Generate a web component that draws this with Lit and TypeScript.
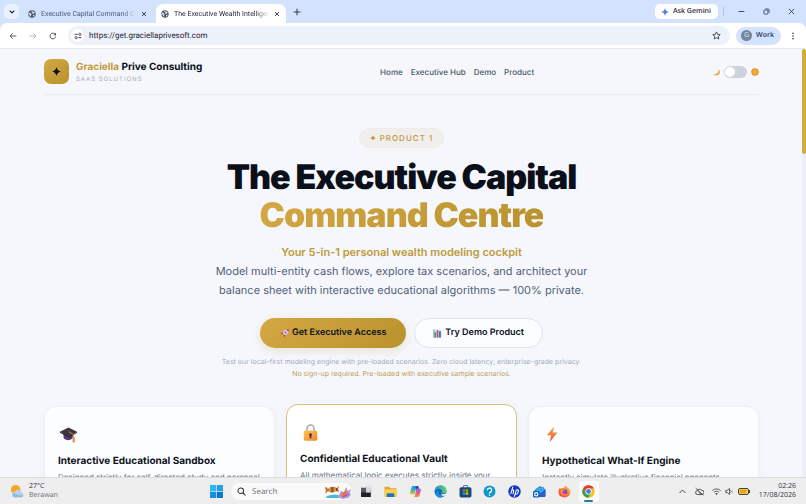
import { LitElement, html, svg, css, nothing } from "lit";
import { customElement, property, state } from "lit/decorators.js";
import { classMap } from "lit/directives/class-map.js";

const glyphs: Record<string, unknown> = {
  globe: svg`<circle cx="12" cy="12" r="11" fill="#4b5563"/><path d="M3 8l5 1 3 4-2 2v5l-3-2-1-4-3-2zM11 2l-1 4 4 2-1 3 4 1 1-3 4-1M15 15l5-1-3 6-2-1z" fill="#d7e3f8"/>`,
  close: svg`<path d="M4 4l16 16M20 4L4 20" stroke="#2b2f36" stroke-width="3.600" fill="none"/>`,
  closeThin: svg`<path d="M3 3l18 18M21 3L3 21" stroke="#2b3a5c" stroke-width="3" fill="none"/>`,
  plus: svg`<path d="M12 2v20M2 12h20" stroke="#333a48" stroke-width="3" fill="none"/>`,
  down: svg`<path d="M5 8l7 7 7-7" stroke="#1f2a44" stroke-width="3.6" fill="none"/>`,
  up: svg`<path d="M4 16l8-8 8 8" stroke="#333" stroke-width="2.4" fill="none"/>`,
  min: svg`<path d="M2 12h20" stroke="#2b3a5c" stroke-width="3"/>`,
  restore: svg`<rect x="3" y="7" width="14" height="14" rx="3" fill="none" stroke="#2b3a5c" stroke-width="2.8"/><path d="M8 3h9a4 4 0 0 1 4 4v9" fill="none" stroke="#2b3a5c" stroke-width="2.6"/>`,
  back: svg`<path d="M22 12H3M11 4l-8 8 8 8" stroke="#444746" stroke-width="2.6" fill="none"/>`,
  forward: svg`<path d="M2 12h19M13 4l8 8-8 8" stroke="#a9acb0" stroke-width="2.6" fill="none"/>`,
  reload: svg`<path d="M20 13a8.500 8.500 0 1 1-3-7.500l3 3" stroke="#444746" stroke-width="2.700" fill="none"/><path d="M21 2v8h-8z" fill="#444746"/>`,
  tune: svg`<path d="M2 7h9M13 17h9" stroke="#444746" stroke-width="3"/><circle cx="17.500" cy="7" r="3.300" fill="none" stroke="#444746" stroke-width="2.800"/><circle cx="6.500" cy="17" r="3.300" fill="none" stroke="#444746" stroke-width="2.800"/>`,
  star: svg`<path d="M12 2.500l2.900 6.500 7 .700-5.300 4.700 1.600 7-6.200-3.700-6.200 3.700 1.600-7L2.100 9.700l7-.700z" fill="none" stroke="#3c4043" stroke-width="2.400"/>`,
  dots: svg`<circle cx="12" cy="4" r="2.400" fill="#3c4043"/><circle cx="12" cy="12" r="2.400" fill="#3c4043"/><circle cx="12" cy="20" r="2.400" fill="#3c4043"/>`,
  gemini: svg`<defs><linearGradient id="g" x1="0" y1="0" x2="1" y2="1"><stop offset="0" stop-color="#ea4335"/><stop offset=".35" stop-color="#6a6fe0"/><stop offset=".65" stop-color="#3186ff"/><stop offset="1" stop-color="#34a853"/></linearGradient></defs><path d="M12 0c1 7 5 11 12 12-7 1-11 5-12 12-1-7-5-11-12-12C7 11 11 7 12 0z" fill="url(#g)"/><path d="M0 12c4 .5 8 2 10 5l-1-5z" fill="#fbbc04"/>`,
  spark: svg`<path d="M12 0c1.500 7 5 10.500 12 12-7 1.500-10.500 5-12 12-1.500-7-5-10.500-12-12C7 10.500 10.500 7 12 0z" fill="currentColor"/>`,
  moon: svg`<path d="M18 2c4 9-2 18-14 17 7 7 18 3 19-6 .3-5-2-9-5-11z" fill="#f6b545"/><path d="M21 8c1 7-4 13-12 13 7 3 14-2 14-8 0-2-1-4-2-5z" fill="#e58e36"/>`,
  sun: svg`<circle cx="12" cy="12" r="11" fill="#e29a2c"/><circle cx="12" cy="12" r="8" fill="#f8ab2f"/><path d="M12 1v3M12 20v3M1 12h3M20 12h3M4 4l2 2M18 18l2 2M20 4l-2 2M4 20l2-2" stroke="#c98220" stroke-width="2"/>`,
  rocket: svg`<path d="M24 0c-8 0-13 3-18 9l9 9c6-5 9-10 9-18z" fill="#dccfdf"/><path d="M24 0c-3 0-5 .3-8 1.500L22.500 8C23.700 5 24 3 24 0z" fill="#e0435f"/><path d="M8 8l-7 5 7 1zM16 16l-5 7-1-7z" fill="#d23a66"/><circle cx="14.500" cy="9.500" r="3" fill="#5a8fc4"/><path d="M6 14l4 4-8 4z" fill="#f3923c"/>`,
  chart: svg`<rect x="1" y="1" width="22" height="22" rx="2" fill="#dfe7ee"/><rect x="3" y="9" width="5" height="14" fill="#3da874"/><rect x="9.500" y="3" width="5" height="20" fill="#d8466b"/><rect x="16" y="6" width="5" height="17" fill="#2e7fd0"/><path d="M1 1h3v22H1z" fill="#7f9db5"/>`,
  cap: svg`<path d="M5 10v7c3 4 10 4 13 0v-6z" fill="#5b3a78"/><path d="M0 8l12-6 12 6-11 7z" fill="#3d3444"/><path d="M0 8l13 7 11-7v1.500l-11 7-13-7z" fill="#241d2c"/><path d="M12 8l7 4v4" stroke="#eb9454" stroke-width="1.200" fill="none"/><path d="M18 15h2.500l.5 8h-3.500z" fill="#ef8a45"/>`,
  lock: svg`<defs><linearGradient id="l" x1="0" y1="0" x2="1" y2="1"><stop offset="0" stop-color="#ffc342"/><stop offset="1" stop-color="#f2853e"/></linearGradient></defs><path d="M7 11V6.500a5 5 0 0 1 10 0V11" fill="none" stroke="#a4a8b2" stroke-width="2.200"/><rect x="2.500" y="9.500" width="19" height="14" rx="2" fill="url(#l)"/><path d="M12 13a2 2 0 0 1 1.200 3.600V20h-2.400v-3.400A2 2 0 0 1 12 13z" fill="#3e3340"/>`,
  bolt: svg`<defs><linearGradient id="b" x1="0" y1="0" x2="0" y2="1"><stop offset="0" stop-color="#fba63f"/><stop offset="1" stop-color="#e4554c"/></linearGradient></defs><path d="M14 1L4 13h6l-2 10L19 9h-6.500z" fill="url(#b)"/>`,
  weather: svg`<circle cx="9" cy="9" r="7.500" fill="#f6a623"/><path d="M8 21a4.500 4.500 0 0 1 0-9 6 6 0 0 1 11 1.500 4 4 0 0 1 0 7.500z" fill="#b9d2ee"/><path d="M6 21a3 3 0 0 1 2-6c5 4 9 3 12 2a3 3 0 0 1-1 4z" fill="#94b6df"/>`,
  windows: svg`<path d="M0 0h11.400v11.400H0z" fill="#2fb4f2"/><path d="M12.600 0H24v11.400H12.600z" fill="#1ea2ea"/><path d="M0 12.600h11.400V24H0z" fill="#1590e0"/><path d="M12.600 12.600H24V24H12.600z" fill="#0878d3"/>`,
  search: svg`<circle cx="10" cy="10" r="7.500" fill="none" stroke="#2e3238" stroke-width="2.700"/><path d="M15.500 15.500l7 7" stroke="#2e3238" stroke-width="3"/>`,
  taskview: svg`<rect x="10" y="1" width="13" height="17" rx="1" fill="#e2e2e2"/><rect x="2" y="5" width="10" height="13" fill="#55585c"/><path d="M2 14h9V9h9v13H2z" fill="#1f2124"/><path d="M11 5h9v9h-9z" fill="#d5d5d5"/>`,
  explorer: svg`<path d="M1 3h8l3 3h10a1 1 0 0 1 1 1v14H1z" fill="#e5a32b"/><path d="M1 8h22v13a1 1 0 0 1-1 1H2a1 1 0 0 1-1-1z" fill="#fbd04f"/><path d="M5 22v-5a2 2 0 0 1 2-2h10a2 2 0 0 1 2 2v5z" fill="#1b74bd"/>`,
  copilot: svg`<defs><linearGradient id="c1" x1="0" y1="0" x2="0" y2="1"><stop offset="0" stop-color="#1497ec"/><stop offset=".5" stop-color="#35b89e"/><stop offset="1" stop-color="#e8c62e"/></linearGradient><linearGradient id="c2" x1="0" y1="0" x2="0" y2="1"><stop offset="0" stop-color="#a159e8"/><stop offset=".5" stop-color="#ef5a8c"/><stop offset="1" stop-color="#f98d42"/></linearGradient></defs><path d="M15 2H8C5 2 4.500 5 3.500 9S0 17 5 17h4c2 0 2-4 3-8s1-6 3-7z" fill="url(#c1)"/><path d="M9 22h7c3 0 3.500-3 4.500-7S24 7 19 7h-4c-2 0-2 4-3 8s-1 6-3 7z" fill="url(#c2)"/><path d="M13 2h3c2 0 2 3 3 5h-4c-1 0-2 1-2 3-1-3-2-8 0-8z" fill="#1d4fb8"/>`,
  edge: svg`<defs><linearGradient id="e" x1="0" y1="0" x2="1" y2="0"><stop offset="0" stop-color="#1e9be0"/><stop offset="1" stop-color="#5fd35a"/></linearGradient></defs><circle cx="12" cy="12" r="11" fill="#1267b8"/><path d="M1 12C2 4 7 1 12 1c7 0 11 5 11 9 0 5-5 6-8 5-2-1 0-2 0-4 0-3-4-5-8-4-3 1-5 3-6 5z" fill="url(#e)"/><path d="M9 10c-4 6 3 12 11 8-3 5-9 6-13 4-6-4-4-11 2-12z" fill="#1b8fd8"/><path d="M14 16c3 2 7 1 9-2v3l-3 3c-5 1-8-2-6-4z" fill="#eef1f4"/>`,
  store: svg`<path d="M8 5V3a2 2 0 0 1 2-2h4a2 2 0 0 1 2 2v2" fill="none" stroke="#2d87c9" stroke-width="2"/><rect x="1" y="4" width="22" height="19" rx="3" fill="#174a78"/><path d="M7 8h4.500v4.500H7z" fill="#f25022"/><path d="M12.500 8H17v4.500h-4.500z" fill="#7fba00"/><path d="M7 13.500h4.500V18H7z" fill="#00a4ef"/><path d="M12.500 13.500H17V18h-4.500z" fill="#ffb900"/>`,
  help: svg`<circle cx="12" cy="12" r="11" fill="#0f97cf"/><path d="M8 9.500a4 4 0 1 1 5.500 3.800c-1.500.7-1.500 1.200-1.500 2.700" fill="none" stroke="#fff" stroke-width="2.400"/><circle cx="12" cy="19" r="1.500" fill="#fff"/>`,
  hp: svg`<circle cx="12" cy="12" r="11.500" fill="#1338c9"/><path d="M9 3L5 17M7 10c2-1 4-1 3.500 1.500L9 17M15.500 9L11.500 22M15.500 9h2c2 0 2 1 1.500 3l-1 3c-.5 1.500-1 2-3 2h-1" fill="none" stroke="#fff" stroke-width="1.900"/>`,
  outlook: svg`<path d="M3 9l10-7 10 6v12a2 2 0 0 1-2 2H6a3 3 0 0 1-3-3z" fill="#1683dd"/><path d="M6 6l14-3v9l-9 4-5-4z" fill="#3fa3e8"/><path d="M4 20L23 9v11a2 2 0 0 1-2 2H6z" fill="#2a5fd0"/><rect x="0" y="11" width="12" height="12" rx="2" fill="#1067be"/><circle cx="6" cy="17" r="3" fill="none" stroke="#fff" stroke-width="2"/>`,
  firefox: svg`<defs><linearGradient id="f" x1="1" y1="0" x2="0" y2="1"><stop offset="0" stop-color="#ffd43c"/><stop offset=".5" stop-color="#ff7a2c"/><stop offset="1" stop-color="#ee2e55"/></linearGradient></defs><path d="M3 5c0 2 1 2 2 2 2-2 4-1 6-1 0-2 2-4 4-5 0 3 4 4 6 7 1 1 2 3 2 5 0 6-5 10-11 10S1 19 1 13c0-3 1-6 2-8z" fill="url(#f)"/><circle cx="12.500" cy="13" r="5" fill="#8347dc"/><path d="M5 9c4-2 6 0 8 1-2 0-4 1-5 3 1 4 6 5 9 2-1 5-8 6-11 2-2-3-2-6-1-8z" fill="#ff8a30"/>`,
  chrome: svg`<circle cx="12" cy="12" r="11.500" fill="#fbc116"/><path d="M2 6.300A11.500 11.500 0 0 1 22 6.300H12L7 15z" fill="#e33b2e"/><path d="M2 6.300A11.500 11.500 0 0 0 11.500 23.500L17 15l-5 2-5-2z" fill="#2da24c"/><circle cx="12" cy="12" r="5.800" fill="#fff"/><circle cx="12" cy="12" r="4.500" fill="#3f7fe8"/>`,
  cloudOff: svg`<path d="M7 20a5 5 0 0 1-1-10 7 7 0 0 1 12-1 5.500 5.500 0 0 1 1 11z" fill="none" stroke="#333" stroke-width="2.200"/><path d="M2 3l20 19M9 13l7 6" stroke="#333" stroke-width="2.200"/>`,
  wifi: svg`<path d="M1 9.500a16 16 0 0 1 22 0M5 14a10 10 0 0 1 14 0" fill="none" stroke="#4a4a4a" stroke-width="2.300"/><path d="M8.500 17.500a5 5 0 0 1 7 0L12 21.500z" fill="#333"/>`,
  sound: svg`<path d="M2 9h4l6-5v16l-6-5H2z" fill="none" stroke="#333" stroke-width="2"/><path d="M15 9a4 4 0 0 1 0 6" fill="none" stroke="#333" stroke-width="2"/><path d="M18 6a8 8 0 0 1 0 12" fill="none" stroke="#b5b5b5" stroke-width="2"/>`,
};

const icon = (name: string) =>
  html`<svg class="icon" viewBox="0 0 24 24" aria-hidden="true">${glyphs[name]}</svg>`;

const iconStyles = css`
  * { box-sizing: border-box; }
  .icon { width: var(--icon, 8px); height: var(--icon, 8px); flex: none; display: block; }
  button { font: inherit; color: inherit; border: 0; padding: 0; background: none; display: flex; align-items: center; justify-content: center; text-rendering: inherit; }
  input { font: inherit; color: inherit; border: 0; padding: 0; margin: 0; background: none; outline: none; min-width: 0; text-rendering: inherit; }
  a { color: inherit; text-decoration: none; }
`;

@customElement("browser-chrome")
class BrowserChrome extends LitElement {
  static styles = [iconStyles, css`
    :host { display: block; font: 7px/10px Roboto, "Noto Sans", sans-serif; color: #1f2430; background: #d3e2fd; }
    .strip { display: flex; height: 23px; padding: 0 11px 0 4px; align-items: center; }
    .search-tabs { width: 15px; height: 15px; border-radius: 5px; background: #e9f0fe; }
    .tabs { display: flex; gap: 3px; align-self: stretch; align-items: flex-end; margin-left: 4px; }
    .tab { display: flex; align-items: center; gap: 5px; width: 130px; height: 19px; padding: 0 6px 0 5px; color: #4a5873; border-radius: 7px 7px 0 0; }
    .tab.active { background: #fff; color: #1f2430; }
    .name { flex: 1; overflow: hidden; white-space: nowrap; text-align: left; mask-image: linear-gradient(90deg, #000 86%, transparent); }
    .tab button { --icon: 6px; }
    .new { margin-left: 7px; }
    .gap { flex: 1; }
    .gemini { height: 15px; padding: 0 7px 0 6px; gap: 4px; border-radius: 5px; background: #fff; font: 600 7px/10px "Open Sans", "Noto Sans", sans-serif; }
    .rule { width: 1px; height: 9px; background: #a9c3f3; margin: 0 14px 0 5px; }
    .controls { display: flex; gap: 18px; --icon: 7px; }
    .bar { display: flex; align-items: center; height: 26px; padding: 0 9px; background: #fff; border-radius: 7px 7px 0 0; border-bottom: 1px solid #e6e9ef; }
    .moves { display: flex; gap: 12px; margin-right: 11px; }
    .address { flex: 1; display: flex; align-items: center; height: 19px; padding: 0 9px 0 3px; gap: 5px; border-radius: 10px; background: #edf1fa; }
    .site { width: 13px; height: 13px; border-radius: 7px; background: #fff; }
    .address input { flex: 1; font-size: 8px; }
    .address { --icon: 9px; }
    .site { --icon: 8px; }
    .profile { height: 18px; padding: 0 7px 0 5px; gap: 4px; margin: 0 8px 0 6px; border-radius: 9px; background: #d3e2fd; color: #1f3768; font: 600 7px/10px "Open Sans", "Noto Sans", sans-serif; }
    .face { width: 11px; height: 11px; border-radius: 6px; background: #71889a; color: #e2e9ee; line-height: 11px; font-weight: 400; }
  `];

  @state() private active = 1;

  private tabs = ["Executive Capital Command Centre", "The Executive Wealth Intelligence"];

  render() {
    return html`
      <div class="strip">
        <button class="search-tabs" aria-label="Search tabs">${icon("down")}</button>
        <div class="tabs" role="tablist">
          ${this.tabs.map((name, i) => html`
            <div class=${classMap({ tab: true, active: i === this.active })} role="tab" aria-selected=${i === this.active} @click=${() => (this.active = i)}>
              ${icon("globe")}<span class="name">${name}</span>
              <button aria-label="Close tab">${icon("close")}</button>
            </div>`)}
        </div>
        <button class="new" aria-label="New tab">${icon("plus")}</button>
        <span class="gap"></span>
        <button class="gemini">${icon("gemini")}Ask Gemini</button>
        <span class="rule"></span>
        <div class="controls">
          <button aria-label="Minimize">${icon("min")}</button>
          <button aria-label="Restore">${icon("restore")}</button>
          <button aria-label="Close">${icon("closeThin")}</button>
        </div>
      </div>
      <div class="bar">
        <div class="moves">
          <button aria-label="Back">${icon("back")}</button>
          <button aria-label="Forward">${icon("forward")}</button>
          <button aria-label="Reload">${icon("reload")}</button>
        </div>
        <div class="address">
          <button class="site" aria-label="Site information">${icon("tune")}</button>
          <input type="text" aria-label="Address" .value=${"https://get.graciellaprivesoft.com"} />
          <button aria-label="Bookmark">${icon("star")}</button>
        </div>
        <button class="profile"><span class="face">G</span>Work</button>
        <button aria-label="Menu">${icon("dots")}</button>
      </div>`;
  }
}

@customElement("feature-card")
class FeatureCard extends LitElement {
  static styles = [iconStyles, css`
    :host { display: block; height: 160px; padding: 19px 13px; border: 1px solid #eceef4; border-radius: 12px; background: #fcfdff; box-shadow: 0 2px 8px #1e2a500a; --icon: 17px; }
    :host([featured]) { margin-top: -2px; border-color: #dcc07a; background: #fff; }
    h2 { margin: 11px 0 2px; font: 700 10px/14px Inter, sans-serif; color: #0f1320; }
    p { margin: 0; font: 400 8px/14px Inter, sans-serif; color: #64748b; }
    .icon { margin-left: 2px; }
  `];

  @property() glyph = "";
  @property() heading = "";
  @property({ type: Boolean, reflect: true }) featured = false;

  render() {
    return html`${icon(this.glyph)}<h2>${this.heading}</h2><p><slot></slot></p>`;
  }
}

@customElement("product-page")
class ProductPage extends LitElement {
  static styles = [iconStyles, css`
    :host { display: flex; overflow: hidden; background: #f5f7fc; font-family: Inter, sans-serif; color: #0b0f1a; }
    .page { flex: 1; min-width: 0; padding: 0 43px 0 44px; }
    .track { width: 4px; background: #eceff7; }
    .thumb { height: 105px; background: #d4a944; border-radius: 2px; }
    header { display: flex; justify-content: space-between; align-items: center; height: 46px; border-bottom: 1px solid #e8ebf2; }
    .brand { display: flex; align-items: center; gap: 7px; }
    .logo { width: 25px; height: 25px; border-radius: 7px; display: grid; place-items: center; background: linear-gradient(135deg, #d4a843, #b8922e); --icon: 9px; }
    .title { display: block; margin-top: 1px; font: 700 10px/13px Inter, sans-serif; }
    .gold { color: #c49b38; }
    .tag { display: block; margin-top: 2px; font: 400 6px/8px Inter, sans-serif; letter-spacing: 1px; color: #a3adbd; }
    nav { display: flex; gap: 8px; font: 500 8px/12px Inter, sans-serif; color: #4b586b; }
    .theme { display: flex; align-items: center; gap: 4px; }
    .switch { appearance: none; width: 23px; height: 12px; padding: 1px; border-radius: 6px; background: #cdd3dd; display: flex; }
    .switch::before { content: ""; width: 10px; height: 10px; border-radius: 5px; background: #fff; }
    .switch:checked { justify-content: flex-end; }
    .hero { display: flex; flex-direction: column; align-items: center; text-align: center; padding-top: 33px; }
    .badge { display: flex; align-items: center; gap: 4px; height: 20px; padding: 0 10px; border-radius: 10px; background: #f1efed; border: 1px solid #f0ece3; color: #bd9740; font: 500 8px/10px Inter, sans-serif; letter-spacing: 1px; --icon: 6px; }
    h1 { margin: 11px 0 0; font: 900 34px/38px Inter, sans-serif; letter-spacing: -1px; }
    .shine { display: block; width: fit-content; margin: 0 auto; background: linear-gradient(135deg, #d4a843, #b8922e); background-clip: text; color: transparent; }
    .lead { margin: 8px 0 0; font: 400 11px/19px Inter, sans-serif; color: #536175; max-width: 380px; }
    .lead strong { display: block; font-weight: 600; color: #c09a3b; }
    .actions { display: flex; gap: 8px; margin-top: 18px; font: 600 9px/12px Inter, sans-serif; --icon: 9px; }
    .actions button { height: 30px; gap: 3px; border-radius: 15px; }
    .actions .primary { padding: 0 20px; background: linear-gradient(135deg, #d4a843, #b8922e); box-shadow: 0 3px 10px #b8922e33; }
    .actions .plain { padding: 0 18px; background: #fbfcff; border: 1px solid #dfe3ea; }
    .note { margin: 8px 0 0; font: 400 7px/12px Inter, sans-serif; color: #a0abbd; }
    .note span { display: block; color: #c0a04e; }
    .cards { display: grid; grid-template-columns: repeat(3, 1fr); gap: 11px; margin-top: 26px; }
  `];

  render() {
    return html`
      <div class="page">
        <header>
          <div class="brand">
            <span class="logo">${icon("spark")}</span>
            <div>
              <span class="title"><span class="gold">Graciella</span> Prive Consulting</span>
              <span class="tag">SAAS SOLUTIONS</span>
            </div>
          </div>
          <nav>${["Home", "Executive Hub", "Demo", "Product"].map((t) => html`<a href="#">${t}</a>`)}</nav>
          <label class="theme">${icon("moon")}<input class="switch" type="checkbox" role="switch" aria-label="Light theme" />${icon("sun")}</label>
        </header>
        <main>
          <section class="hero">
            <span class="badge">${icon("spark")}PRODUCT 1</span>
            <h1>The Executive Capital<span class="shine">Command Centre</span></h1>
            <p class="lead"><strong>Your 5-in-1 personal wealth modeling cockpit</strong>Model multi-entity cash flows, explore tax scenarios, and architect your balance sheet with interactive educational algorithms — 100% private.</p>
            <div class="actions">
              <button class="primary">${icon("rocket")}Get Executive Access</button>
              <button class="plain">${icon("chart")}Try Demo Product</button>
            </div>
            <p class="note">Test our local-first modeling engine with pre-loaded scenarios. Zero cloud latency, enterprise-grade privacy.<span>No sign-up required. Pre-loaded with executive sample scenarios.</span></p>
          </section>
          <section class="cards">
            <feature-card glyph="cap" heading="Interactive Educational Sandbox">Designed strictly for self-directed study and personal</feature-card>
            <feature-card glyph="lock" heading="Confidential Educational Vault" featured>All mathematical logic executes strictly inside your</feature-card>
            <feature-card glyph="bolt" heading="Hypothetical What-If Engine">Instantly simulate illustrative financial concepts</feature-card>
          </section>
        </main>
      </div>
      <div class="track"><div class="thumb"></div></div>`;
  }
}

@customElement("task-bar")
class TaskBar extends LitElement {
  static styles = [iconStyles, css`
    :host { display: grid; grid-template-columns: 1fr auto 1fr; align-items: center; box-sizing: border-box; height: 27px; padding: 0 10px; background: #eeeeef; border-top: 1px solid #dcdde0; font: 7px/9px "Open Sans", "Noto Sans", sans-serif; color: #33363b; }
    .weather { display: flex; align-items: center; gap: 4px; --icon: 15px; }
    .weather small { display: block; font-size: 7px; color: #6b6e73; }
    .middle { display: flex; align-items: center; gap: 4px; padding-left: 3px; --icon: 13px; }
    .start { margin-right: 4px; }
    .search { display: flex; align-items: center; gap: 6px; width: 121px; height: 17px; padding: 0 0 0 6px; border-radius: 9px; background: #fafafa; --icon: 9px; overflow: hidden; }
    .search input { flex: 1; font-size: 8px; }
    .search input::placeholder { color: #6a6d72; opacity: 1; }
    .fish { width: 28px; height: 16px; flex: none; }
    .apps { display: flex; justify-content: space-between; width: 243px; }
    .apps button { position: relative; width: 20px; height: 21px; border-radius: 3px; }
    .apps .open { background: #fafafa; }
    .apps .open::after { content: ""; position: absolute; bottom: 0; width: 9px; height: 2px; border-radius: 1px; background: #2b7a94; }
    .tray { display: flex; align-items: center; justify-content: flex-end; gap: 4px; --icon: 9px; }
    .tray .wide { margin-right: 4px; }
    .battery { width: 12px; height: 7px; }
    .clock { margin-left: 5px; text-align: right; }
    .clock span { display: block; }
  `];

  private apps = ["taskview", "explorer", "copilot", "edge", "store", "help", "hp", "outlook", "firefox", "chrome"];

  render() {
    return html`
      <div class="weather">${icon("weather")}<div>27°C<small>Berawan</small></div></div>
      <div class="middle">
        <button class="start" aria-label="Start">${icon("windows")}</button>
        <label class="search">${icon("search")}<input type="text" placeholder="Search" aria-label="Search" />
          <svg class="fish" viewBox="0 0 28 16" aria-hidden="true">
            <path d="M3 13q8-3 14 0l-3 2H2z" fill="#4cb6dc"/>
            <path d="M1 4q2 0 3 2q4-4 9-1l2-2q0 2-1 3 1 1 1 3l-3-1q-4 3-8 0-1 2-3 2 1-2 1-3-1-1-1-3z" fill="#c4701a"/>
            <path d="M6 5v4M11 4v5" stroke="#f4e6d4" stroke-width=".6"/><path d="M8 4v5M12.500 5v3" stroke="#49352a" stroke-width=".8"/>
            <path d="M14 14l3-6 3 1 2-5 2 4 3-2-1 4 1 2-3 3-6 1z" fill="#b99ad0"/>
            <path d="M17 11l4-3 3 1-2 4-4 1z" fill="#e8704c"/><path d="M19 14l6-3" stroke="#6d55cf" stroke-width="1"/>
          </svg>
        </label>
        <div class="apps">
          ${this.apps.map((a) => html`<button class=${a === "chrome" ? "open" : nothing} aria-label=${a}>${icon(a)}</button>`)}
        </div>
      </div>
      <div class="tray">
        <button class="wide" aria-label="Hidden icons">${icon("up")}</button>
        <span class="wide">${icon("cloudOff")}</span>
        ${icon("wifi")}${icon("sound")}
        <svg class="battery" viewBox="0 0 24 14" aria-hidden="true"><rect x="1" y="1" width="20" height="12" rx="3" fill="#f4d893" stroke="#4a4636" stroke-width="2"/><rect x="3" y="3" width="14" height="8" fill="#e8a80e"/><path d="M23 4v6" stroke="#4a4636" stroke-width="2"/></svg>
        <div class="clock"><span>02:26</span><span>17/08/2026</span></div>
      </div>`;
  }
}

@customElement("app-root")
class AppRoot extends LitElement {
  static styles = css`
    :host { display: flex; flex-direction: column; height: 100vh; overflow: hidden; text-rendering: geometricPrecision; }
    .view { flex: 1; min-height: 0; }
  `;

  render() {
    return html`<browser-chrome></browser-chrome><product-page class="view"></product-page><task-bar></task-bar>`;
  }
}
